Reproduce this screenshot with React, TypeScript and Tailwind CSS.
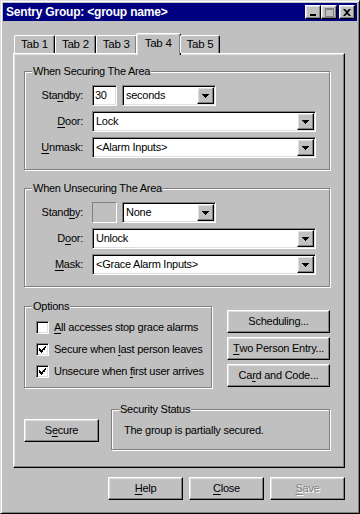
import React from "react";

const raised =
  "border border-t-white border-l-white border-r-black border-b-black shadow-[inset_-1px_-1px_0_#808080,inset_1px_1px_0_#dfdfdf]";
const sunken =
  "border border-t-[#808080] border-l-[#808080] border-r-white border-b-white shadow-[inset_1px_1px_0_#000,inset_-1px_-1px_0_#dfdfdf]";
const etched = "border border-[#808080] shadow-[inset_1px_1px_0_#fff,1px_1px_0_#fff]";

function U({ children }: { children: React.ReactNode }) {
    return <span className="underline underline-offset-[2px] decoration-[1px]">{children}</span>;
}

function Arrow() {
    return (
        <svg width="7" height="4" viewBox="0 0 7 4" className="block">
            <path d="M0 0h7v1H0zM1 1h5v1H1zM2 2h3v1H2zM3 3h1v1H3z" fill="#000" />
        </svg>
    );
}

function Combo({ value, className }: { value: string; className: string }) {
    return (
        <div className={`h-[21px] bg-white flex items-center ${sunken} ${className}`}>
            <span className="flex-1 pl-[3px] truncate">{value}</span>
            <div className={`w-[17px] h-[17px] shrink-0 bg-[#c0c0c0] flex items-center justify-center mr-[1px] ${raised}`}>
                <Arrow />
            </div>
        </div>
    );
}

function Group({ title, className, children }: { title: string; className: string; children: React.ReactNode }) {
    return (
        <div className={`relative ${etched} ${className}`}>
            <span className="absolute -top-[7px] left-[7px] px-[1px] bg-[#c0c0c0] leading-[13px]">{title}</span>
            {children}
        </div>
    );
}

function Button({ children, className = "", disabled }: { children: React.ReactNode; className?: string; disabled?: boolean }) {
    return (
        <div className={`h-[23px] bg-[#c0c0c0] flex items-center justify-center ${raised} ${className} ${disabled ? "text-[#808080] [text-shadow:1px_1px_0_#fff]" : ""}`}>
            {children}
        </div>
    );
}

function Check({ checked }: { checked: boolean }) {
    return (
        <div className={`w-[13px] h-[13px] shrink-0 bg-white flex items-center justify-center ${sunken}`}>
            {checked && (
                <svg width="7" height="7" viewBox="0 0 7 7" className="block">
                    <path d="M6 0h1v1H6zM5 1h1v1H5zM0 2h1v3H0zM4 2h1v2H4zM1 3h1v3H1zM3 3h1v3H3zM2 4h1v3H2zM6 1h1v1H6zM5 2h1v2H5z" fill="#000" />
                </svg>
            )}
        </div>
    );
}

function Row({ label, children }: { label: React.ReactNode; children: React.ReactNode }) {
    return (
        <div className="flex items-center h-[21px]">
            <div className="w-[58px] text-right">{label}</div>
            <div className="flex-1 flex items-center ml-[9px] gap-[5px]">{children}</div>
        </div>
    );
}

export default function App() {
    const tabs = ["Tab 1", "Tab 2", "Tab 3", "Tab 4", "Tab 5"];

    return (
        <div className="w-[360px] h-[514px] bg-[#c0c0c0] border border-t-[#dfdfdf] border-l-[#dfdfdf] border-r-black border-b-black shadow-[inset_1px_1px_0_#fff,inset_-1px_-1px_0_#808080] p-[2px] flex flex-col text-[11px] leading-[13px] tracking-[-0.25px] text-black [font-family:'Liberation_Sans',Arial,sans-serif] select-none">
            <div className="h-[18px] bg-[#000080] grid grid-cols-[1fr_16px_16px_2px_16px] items-center pl-[3px] pr-[2px]">
                <span className="text-white font-bold text-[12px] tracking-[-0.2px]">Sentry Group: &lt;group name&gt;</span>
                <div className={`h-[14px] bg-[#c0c0c0] flex items-end justify-center pb-[2px] ${raised}`}>
                    <div className="w-[6px] h-[2px] bg-black -ml-[1px]" />
                </div>
                <div className={`h-[14px] bg-[#c0c0c0] flex items-center justify-center ${raised}`}>
                    <div className="w-[9px] h-[9px] border border-t-2 border-[#808080]" />
                </div>
                <div />
                <div className={`h-[14px] bg-[#c0c0c0] flex items-center justify-center ${raised}`}>
                    <svg width="8" height="7" viewBox="0 0 8 7" className="block">
                        <path d="M0 0h2l2 2 2-2h2L5 3.5 8 7H6L4 5 2 7H0l3-3.5z" fill="#000" />
                    </svg>
                </div>
            </div>

            <div className="flex flex-col ml-[10px] mr-[12px] mt-[12px]">
                <div className="flex items-end h-[20px] pl-[1px] relative z-10">
                    {tabs.map((t, i) =>
                        i === 3 ? (
                            <div
                                key={t}
                                className="h-[22px] -mb-[2px] -mx-[1px] px-[8px] pt-[3px] bg-[#c0c0c0] border-t border-l border-r border-t-white border-l-white border-r-black rounded-t-[2px] shadow-[inset_-1px_0_0_#808080,inset_1px_1px_0_#dfdfdf] text-[11.5px]"
                            >
                                {t}
                            </div>
                        ) : (
                            <div
                                key={t}
                                className="h-[18px] px-[6px] pt-[2px] bg-[#c0c0c0] border-t border-l border-r border-t-white border-l-white border-r-black rounded-t-[2px] shadow-[inset_-1px_0_0_#808080] text-[11.5px]"
                            >
                                {t}
                            </div>
                        )
                    )}
                </div>

                <div className={`h-[415px] ${raised} bg-[#c0c0c0] pl-[10px] pr-[14px] pt-[17px] pb-[17px] flex flex-col`}>
                    <Group title="When Securing The Area" className="h-[99px] pt-[13px] flex flex-col gap-[5px] pr-[13px]">
                        <Row label={<>Sta<U>n</U>dby:</>}>
                            <div className={`w-[25px] h-[21px] bg-white pl-[2px] flex items-center ${sunken}`}>30</div>
                            <Combo value="seconds" className="w-[94px]" />
                        </Row>
                        <Row label={<><U>D</U>oor:</>}>
                            <Combo value="Lock" className="flex-1" />
                        </Row>
                        <Row label={<><U>U</U>nmask:</>}>
                            <Combo value="<Alarm Inputs>" className="flex-1" />
                        </Row>
                    </Group>

                    <Group title="When Unsecuring The Area" className="h-[99px] mt-[18px] pt-[13px] flex flex-col gap-[5px] pr-[13px]">
                        <Row label={<>Stand<U>b</U>y:</>}>
                            <div className="w-[25px] h-[21px] bg-[#c0c0c0] border border-t-[#808080] border-l-[#808080] border-r-white border-b-white" />
                            <Combo value="None" className="w-[94px]" />
                        </Row>
                        <Row label={<>D<U>o</U>or:</>}>
                            <Combo value="Unlock" className="flex-1" />
                        </Row>
                        <Row label={<><U>M</U>ask:</>}>
                            <Combo value="<Grace Alarm Inputs>" className="flex-1" />
                        </Row>
                    </Group>

                    <div className="flex mt-[19px]">
                        <Group title="Options" className="w-[188px] h-[82px] pl-[11px] pt-[14px] flex flex-col gap-[9px]">
                            <div className="flex items-center gap-[5px]">
                                <Check checked={false} />
                                <span><U>A</U>ll accesses stop grace alarms</span>
                            </div>
                            <div className="flex items-center gap-[5px]">
                                <Check checked />
                                <span>Secure when <U>l</U>ast person leaves</span>
                            </div>
                            <div className="flex items-center gap-[5px]">
                                <Check checked />
                                <span>Unsecure when <U>f</U>irst user arrives</span>
                            </div>
                        </Group>
                        <div className="ml-auto w-[103px] pt-[4px] flex flex-col gap-[4px]">
                            <Button>Scheduling...</Button>
                            <Button><U>T</U>wo Person Entry...</Button>
                            <Button>Ca<U>r</U>d and Code...</Button>
                        </div>
                    </div>

                    <div className="flex mt-[21px]">
                        <Button className="w-[75px] mt-[10px]">S<U>e</U>cure</Button>
                        <Group title="Security Status" className="ml-auto w-[219px] h-[41px] pl-[12px] pt-[2px] flex items-center">
                            <span>The group is partially secured.</span>
                        </Group>
                    </div>
                </div>

                <div className="flex justify-end gap-[6px] mt-[9px]">
                    <Button className="w-[75px]"><U>H</U>elp</Button>
                    <Button className="w-[75px]"><U>C</U>lose</Button>
                    <Button className="w-[75px]" disabled><U>S</U>ave</Button>
                </div>
            </div>
        </div>
    );
}
